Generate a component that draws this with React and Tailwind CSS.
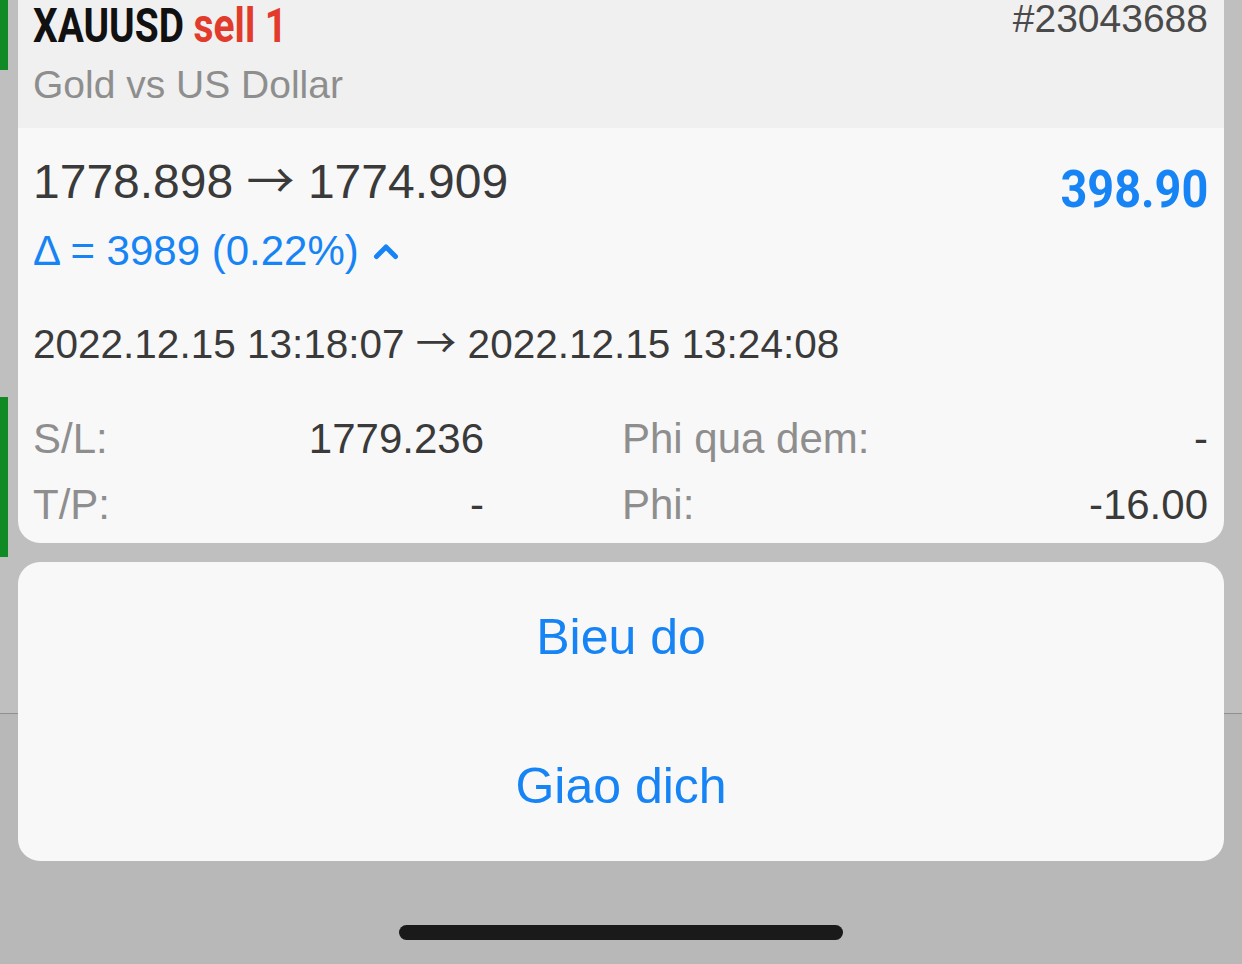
export default function App() {
  const sans = { fontFamily: '"Liberation Sans", Arial, sans-serif' };
  const arrow = { fontFamily: '"Noto Sans CJK SC", "DejaVu Sans", sans-serif' };
  return (
    <div className="relative w-[1242px] h-[964px] overflow-hidden" style={sans}>
      {/* underlying dimmed list */}
      <div className="flex flex-col h-full">
        <div className="h-[713px] bg-[#bfbfbf] flex flex-col">
          <div className="w-[8px] h-[70px] bg-[#0f8a25]" />
          <div className="w-[8px] h-[160px] mt-[327px] bg-[#0f8a25]" />
        </div>
        <div className="h-[1px] bg-[#8f8f8f]" />
        <div className="flex-1 bg-[#b8b8b8]" />
      </div>

      {/* overlay */}
      <div className="absolute inset-0 flex flex-col px-[18px]">
        {/* card */}
        <div className="rounded-b-[22px] overflow-hidden">
          <div className="bg-[#f0f0f0] pl-[15px] pr-[16px] pb-[21px]">
            <div className="flex justify-between items-start">
              <div
                className="h-[51px] leading-[51px] text-[48px] font-bold origin-left scale-x-[0.81] whitespace-nowrap"
                style={{ fontFamily: 'Roboto, sans-serif' }}
              >
                <span className="text-[#111111]">XAUUSD</span>{' '}
                <span className="text-[#e23b2c]">sell 1</span>
              </div>
              <div className="text-[39px] leading-[37px] text-[#4a4a4a]">#23043688</div>
            </div>
            <div className="mt-[11px] text-[39px] leading-[45px] text-[#8e8e8e]">Gold vs US Dollar</div>
          </div>
          <div className="bg-[#f8f8f8] pl-[15px] pr-[16px] pt-[26px] pb-[5px]">
            <div className="flex justify-between items-start">
              <div className="flex flex-col">
                <div className="h-[56px] text-[48px] leading-[56px] text-[#3a3a3a] whitespace-nowrap">
                  1778.898 <span className="leading-[0]" style={arrow}>→</span> 1774.909
                </div>
                <div className="mt-[16px] h-[50px] flex items-center gap-[14px] text-[42px] leading-[50px] text-[#1784f5]">
                  <span>Δ = 3989 (0.22%)</span>
                  <svg width="26" height="18" viewBox="0 0 26 18">
                    <path d="M3.5 14.5 L13 5 L22.5 14.5" fill="none" stroke="#1784f5" strokeWidth="5" strokeLinecap="round" strokeLinejoin="round" />
                  </svg>
                </div>
              </div>
              <div
                className="mt-[8px] text-[52px] leading-[56px] font-bold text-[#1784f5] origin-right scale-x-[0.9] whitespace-nowrap"
                style={{ fontFamily: 'Roboto, sans-serif' }}
              >
                398.90
              </div>
            </div>
            <div className="mt-[43px] h-[50px] text-[40.5px] leading-[50px] text-[#3a3a3a] whitespace-nowrap">
              2022.12.15 13:18:07 <span className="leading-[0]" style={arrow}>→</span> 2022.12.15 13:24:08
            </div>
            <div className="mt-[37px] grid grid-cols-[451px_1fr] gap-x-[138px] text-[42px] leading-[66px]">
              <div className="flex justify-between">
                <span className="text-[#8e8e8e]">S/L:</span>
                <span className="text-[#3a3a3a]">1779.236</span>
              </div>
              <div className="flex justify-between">
                <span className="text-[#8e8e8e]">Phi qua dem:</span>
                <span className="text-[#3a3a3a]">-</span>
              </div>
              <div className="flex justify-between">
                <span className="text-[#8e8e8e]">T/P:</span>
                <span className="text-[#3a3a3a]">-</span>
              </div>
              <div className="flex justify-between">
                <span className="text-[#8e8e8e]">Phi:</span>
                <span className="text-[#3a3a3a]">-16.00</span>
              </div>
            </div>
          </div>
        </div>

        {/* action sheet */}
        <div className="mt-[19px] rounded-[22px] bg-[#f8f8f8] flex flex-col">
          <button className="h-[150px] flex items-center justify-center text-[50px] text-[#1784f5]">Bieu do</button>
          <button className="h-[149px] flex items-center justify-center text-[50px] text-[#1784f5]">Giao dich</button>
        </div>

        {/* home indicator */}
        <div className="mt-[64px] flex justify-center">
          <div className="w-[444px] h-[15px] rounded-full bg-[#1a1a1a]" />
        </div>
      </div>
    </div>
  );
}
